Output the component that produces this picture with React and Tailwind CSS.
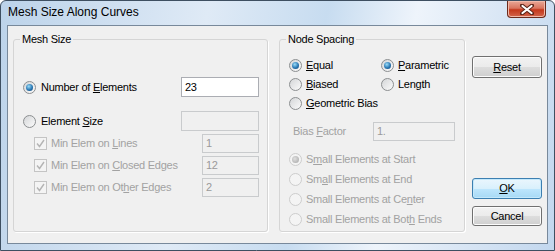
import React from 'react';

const font = "font-['Liberation_Sans',Arial,sans-serif]";

function Radio({ checked, disabled }) {
  return (
    <span
      className={`inline-flex h-[13px] w-[13px] shrink-0 items-center justify-center rounded-full border ${
        disabled
          ? 'border-[#cdcdcd] bg-[#f4f4f4]'
          : 'border-[#8c8f91] bg-[linear-gradient(135deg,#d4d6d8,#fbfbfb)]'
      }`}
    >
      {checked && (
        <span
          className={`h-[7px] w-[7px] rounded-full ${
            disabled
              ? 'bg-[radial-gradient(circle_at_40%_40%,#e0e0e0,#a4a4a4)]'
              : 'bg-[radial-gradient(circle_at_40%_35%,#9adcf8,#2a78b4_55%,#0f3f6b)]'
          }`}
        />
      )}
    </span>
  );
}

function Check() {
  // disabled, checked
  return (
    <span className="inline-flex h-[13px] w-[13px] shrink-0 items-center justify-center border border-[#c4c4c4] bg-[#f4f4f4]">
      <svg width="9" height="9" viewBox="0 0 9 9">
        <path d="M1 4.5 L3.5 7.5 L8 1" fill="none" stroke="#b4b4b4" strokeWidth="1.4" />
      </svg>
    </span>
  );
}

function Field({ value, disabled, className }) {
  return (
    <div
      className={`flex items-center border px-[3px] text-[11px] ${
        disabled ? 'border-[#c9cbcd] bg-[#f0f0f0] text-[#9a9a9a]' : 'border-[#abadb3] bg-white text-black'
      } ${className}`}
    >
      {value}
    </div>
  );
}

function Group({ title, className, children }) {
  return (
    <div className={`relative rounded-[3px] border border-[#d5d5d5] shadow-[1px_1px_0_#fff] ${className}`}>
      <span className="absolute left-[6px] top-[-8px] bg-[#f0f0f0] px-[2px] text-[11px] leading-[14px] text-black">
        {title}
      </span>
      {children}
    </div>
  );
}

function Button({ children, primary, className }) {
  return (
    <div
      className={`flex items-center justify-center rounded-[3px] border text-[11px] text-black ${
        primary
          ? 'border-[#3c7fb1] bg-[linear-gradient(#eaf6fd_0%,#d9f0fc_50%,#bee6fd_51%,#a7d9f5_100%)] shadow-[inset_0_0_0_1px_#c4e8fb]'
          : 'border-[#707070] bg-[linear-gradient(#f2f2f2_0%,#ebebeb_50%,#dddddd_51%,#cfcfcf_100%)] shadow-[inset_0_0_0_1px_#fcfcfc]'
      } ${className}`}
    >
      {children}
    </div>
  );
}

export default function App() {
  const dim = 'text-[#a2a2a2]';
  return (
    <div className={`${font} h-[251px] w-[555px] select-none`}>
      <div className="flex h-full w-full flex-col rounded-t-[6px] border border-[#3e4f61] bg-[linear-gradient(100deg,#bcd3ea_0%,#dfeaf6_35%,#c7dcf0_55%,#eef4fb_70%,#c2d7ee_100%)] px-[6px] pb-[6px]">
        {/* title bar */}
        <div className="flex h-[24px] items-start justify-between">
          <div className="pl-[1px] pt-[4px] text-[12px] leading-[15px] text-black">Mesh Size Along Curves</div>
          <div className="mr-[2px] flex h-[17px] w-[39px] items-center justify-center rounded-b-[4px] border border-t-0 border-[#6b2a1c] bg-[linear-gradient(#e9a897_0%,#d9755f_45%,#c4381c_55%,#d2654c_100%)] shadow-[inset_0_0_0_1px_#f1b9a9]">
            <svg width="14" height="11" viewBox="0 0 14 11">
              <path d="M2 1.5 L12 9.5 M12 1.5 L2 9.5" stroke="#5a2418" strokeWidth="4" strokeLinecap="round" />
              <path d="M2.5 2 L11.5 9 M11.5 2 L2.5 9" stroke="#ffffff" strokeWidth="2.2" strokeLinecap="round" />
            </svg>
          </div>
        </div>

        {/* client area */}
        <div className="flex flex-1 border border-[#78899b] bg-[#f0f0f0] pl-[5px] pt-[13px] tracking-[-0.25px]">
          {/* Mesh Size */}
          <Group title="Mesh Size" className="h-[193px] w-[255px]">
            <div className="flex flex-col pl-[9px] pr-[8px] pt-[37px] text-[11px] leading-[13px]">
              <div className="flex h-[20px] items-center justify-between">
                <div className="flex items-center gap-[5px]">
                  <Radio checked />
                  <span>
                    Number of <u>E</u>lements
                  </span>
                </div>
                <Field value="23" className="h-[20px] w-[78px]" />
              </div>
              <div className="mt-[14px] flex h-[20px] items-center justify-between">
                <div className="flex items-center gap-[5px]">
                  <Radio />
                  <span>
                    Element <u>S</u>ize
                  </span>
                </div>
                <Field disabled className="h-[20px] w-[78px]" />
              </div>
              {[
                [<>Min Elem on <u>L</u>ines</>, '1'],
                [<>Min Elem on <u>C</u>losed Edges</>, '12'],
                [<>Min Elem on Ot<u>h</u>er Edges</>, '2'],
              ].map(([label, v], i) => (
                <div key={i} className="mt-[3px] flex h-[19px] items-center justify-between pl-[11px]">
                  <div className={`flex items-center gap-[4px] ${dim}`}>
                    <Check />
                    <span>{label}</span>
                  </div>
                  <Field disabled value={v} className="h-[19px] w-[57px]" />
                </div>
              ))}
            </div>
          </Group>

          {/* Node Spacing */}
          <Group title="Node Spacing" className="ml-[11px] h-[193px] w-[186px]">
            <div className="flex flex-col pl-[9px] pt-[18px] text-[11px] leading-[13px]">
              <div className="grid h-[15px] grid-cols-[92px_1fr] items-center">
                <div className="flex items-center gap-[4px]">
                  <Radio checked />
                  <span>
                    <u>E</u>qual
                  </span>
                </div>
                <div className="flex items-center gap-[4px]">
                  <Radio checked />
                  <span>
                    <u>P</u>arametric
                  </span>
                </div>
              </div>
              <div className="mt-[4px] grid h-[15px] grid-cols-[92px_1fr] items-center">
                <div className="flex items-center gap-[4px]">
                  <Radio />
                  <span>
                    <u>B</u>iased
                  </span>
                </div>
                <div className="flex items-center gap-[4px]">
                  <Radio />
                  <span>Length</span>
                </div>
              </div>
              <div className="mt-[4px] flex h-[15px] items-center gap-[4px]">
                <Radio />
                <span>
                  <u>G</u>eometric Bias
                </span>
              </div>
              <div className={`mt-[11px] flex h-[19px] items-center ${dim}`}>
                <span className="w-[84px] pl-[4px]">
                  Bias <u>F</u>actor
                </span>
                <Field disabled value="1." className="h-[19px] w-[82px]" />
              </div>
              <div className={`mt-[11px] flex flex-col gap-[5px] ${dim}`}>
                <div className="flex h-[15px] items-center gap-[4px]">
                  <Radio checked disabled />
                  <span>
                    S<u>m</u>all Elements at Start
                  </span>
                </div>
                <div className="flex h-[15px] items-center gap-[4px]">
                  <Radio disabled />
                  <span>
                    Sm<u>a</u>ll Elements at End
                  </span>
                </div>
                <div className="flex h-[15px] items-center gap-[4px]">
                  <Radio disabled />
                  <span>
                    Small Elements at Ce<u>n</u>ter
                  </span>
                </div>
                <div className="flex h-[15px] items-center gap-[4px]">
                  <Radio disabled />
                  <span>
                    Small Elements at Bot<u>h</u> Ends
                  </span>
                </div>
              </div>
            </div>
          </Group>

          {/* buttons */}
          <div className="ml-[7px] flex w-[70px] flex-col pt-[17px]">
            <Button className="h-[22px]">
              <span>
                <u>R</u>eset
              </span>
            </Button>
            <Button primary className="mt-[100px] h-[21px]">
              <span>
                <u>O</u>K
              </span>
            </Button>
            <Button className="mt-[7px] h-[20px]">Cancel</Button>
          </div>
        </div>
      </div>
    </div>
  );
}
